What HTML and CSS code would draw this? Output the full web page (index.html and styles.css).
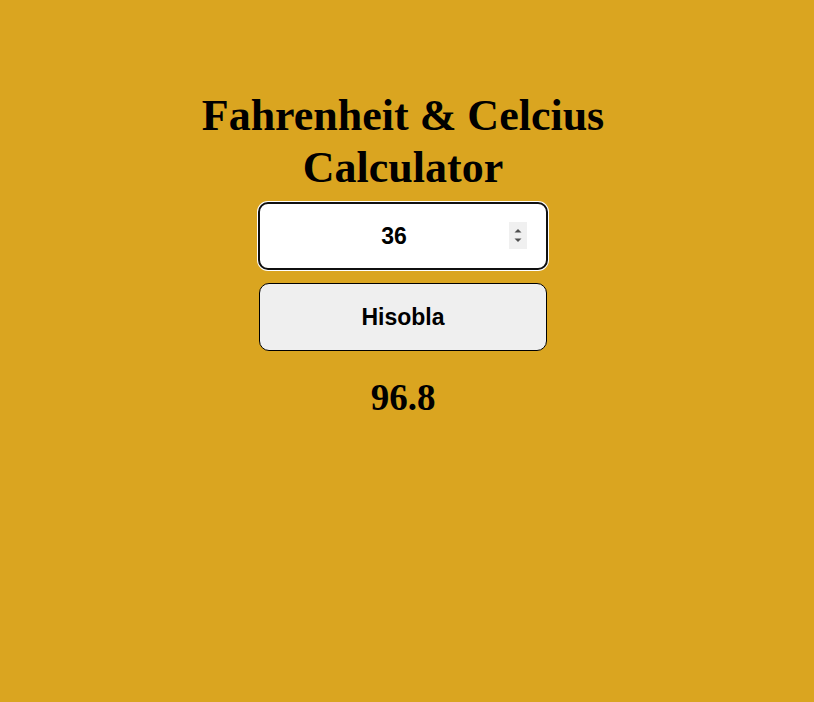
FILE: index.html
```html
<!DOCTYPE html>
<html lang="en">
<head>
<meta charset="utf-8">
<title>Fahrenheit &amp; Celcius Calculator</title>
<link rel="stylesheet" href="styles.css">
</head>
<body>
<main class="calc">
  <h1 class="calc-title">Fahrenheit &amp; Celcius Calculator</h1>
  <div class="calc-field">
    <input class="calc-input" type="number" value="36">
    <span class="calc-spin" aria-hidden="true">
      <svg width="18" height="27" viewBox="0 0 18 27">
        <path d="M5.5 10.5 L9 7 L12.5 10.5 Z" fill="#505050"/>
        <path d="M5.5 16.5 L9 20 L12.5 16.5 Z" fill="#505050"/>
      </svg>
    </span>
  </div>
  <button class="calc-button" type="button">Hisobla</button>
  <h2 class="calc-result">96.8</h2>
</main>
</body>
</html>
```

FILE: styles.css
```css
html, body {
  margin: 0;
  padding: 0;
}
body {
  background: #daa520;
  font-family: "Liberation Serif", "Times New Roman", serif;
  min-height: 100vh;
}
.calc {
  display: flex;
  flex-direction: column;
  align-items: center;
  padding: 90px 8px 0 0;
}
.calc-title {
  margin: 0 0 8px;
  width: 420px;
  text-align: center;
  font-size: 44px;
  font-weight: bold;
  line-height: 52px;
  color: #000;
}
.calc-field {
  position: relative;
  width: 290px;
  height: 68px;
}
.calc-input {
  box-sizing: border-box;
  width: 100%;
  height: 100%;
  border: 2px solid #101010;
  border-radius: 10px;
  background: #fff;
  outline: none;
  box-shadow: 0 0 0 1px #fff;
  text-align: center;
  font-family: "Liberation Sans", Arial, sans-serif;
  font-size: 23px;
  font-weight: bold;
  color: #000;
  padding: 0 40px 0 22px;
  -moz-appearance: textfield;
}
.calc-input::-webkit-inner-spin-button,
.calc-input::-webkit-outer-spin-button {
  -webkit-appearance: none;
  margin: 0;
}
.calc-spin {
  position: absolute;
  left: 251px;
  top: 20px;
  width: 18px;
  height: 27px;
  background: #f0f0f0;
  display: block;
}
.calc-spin svg {
  display: block;
}
.calc-button {
  box-sizing: border-box;
  margin-top: 13px;
  width: 288px;
  height: 68px;
  border: 1px solid #000;
  border-radius: 10px;
  background: #efefef;
  font-family: "Liberation Sans", Arial, sans-serif;
  font-size: 23px;
  font-weight: bold;
  color: #000;
}
.calc-result {
  margin: 26px 0 0;
  font-size: 37px;
  font-weight: bold;
  line-height: 42px;
  color: #000;
}
```
